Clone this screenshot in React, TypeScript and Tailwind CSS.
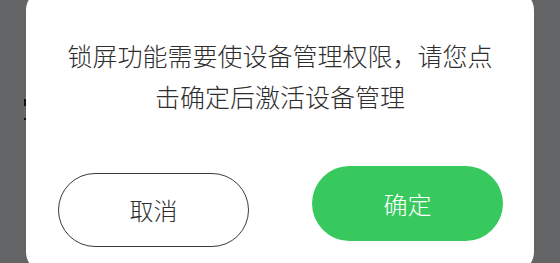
import * as React from 'react';

const App: React.FC = () => {
    return (
        <div
            className="relative w-[560px] h-[263px] overflow-hidden bg-[#636466]"
            style={{ fontFamily: '"Noto Sans CJK SC", "Noto Sans", sans-serif' }}
        >
            {/* bits of the page behind the overlay */}
            <div className="absolute left-[24px] top-[99px] w-[2px] h-[7px] bg-[#111]" />
            <div className="absolute left-[24px] top-[118px] w-[3px] h-[2px] bg-[#111]" />

            <div className="relative ml-[26px] mt-[-10px] w-[508px] h-[282px] rounded-[20px] bg-white">
                <p className="pt-[45px] px-[20px] text-center text-[25px] font-light leading-[41px] text-[#2e2e2e]">
                    锁屏功能需要使设备管理权限，请您点
                    <br />
                    击确定后激活设备管理
                </p>

                <div className="flex items-start gap-[63px] pl-[32px] pr-[31px] mt-[49px]">
                    <button className="mt-[7px] w-[191px] h-[74px] rounded-full border-[1.5px] border-[#3a3a3a] bg-white text-[24px] font-light text-[#2e2e2e]">
                        取消
                    </button>
                    <button className="w-[191px] h-[75px] rounded-full bg-[#37c95d] text-[24px] font-light text-white">
                        确定
                    </button>
                </div>
            </div>
        </div>
    );
};

export default App;
